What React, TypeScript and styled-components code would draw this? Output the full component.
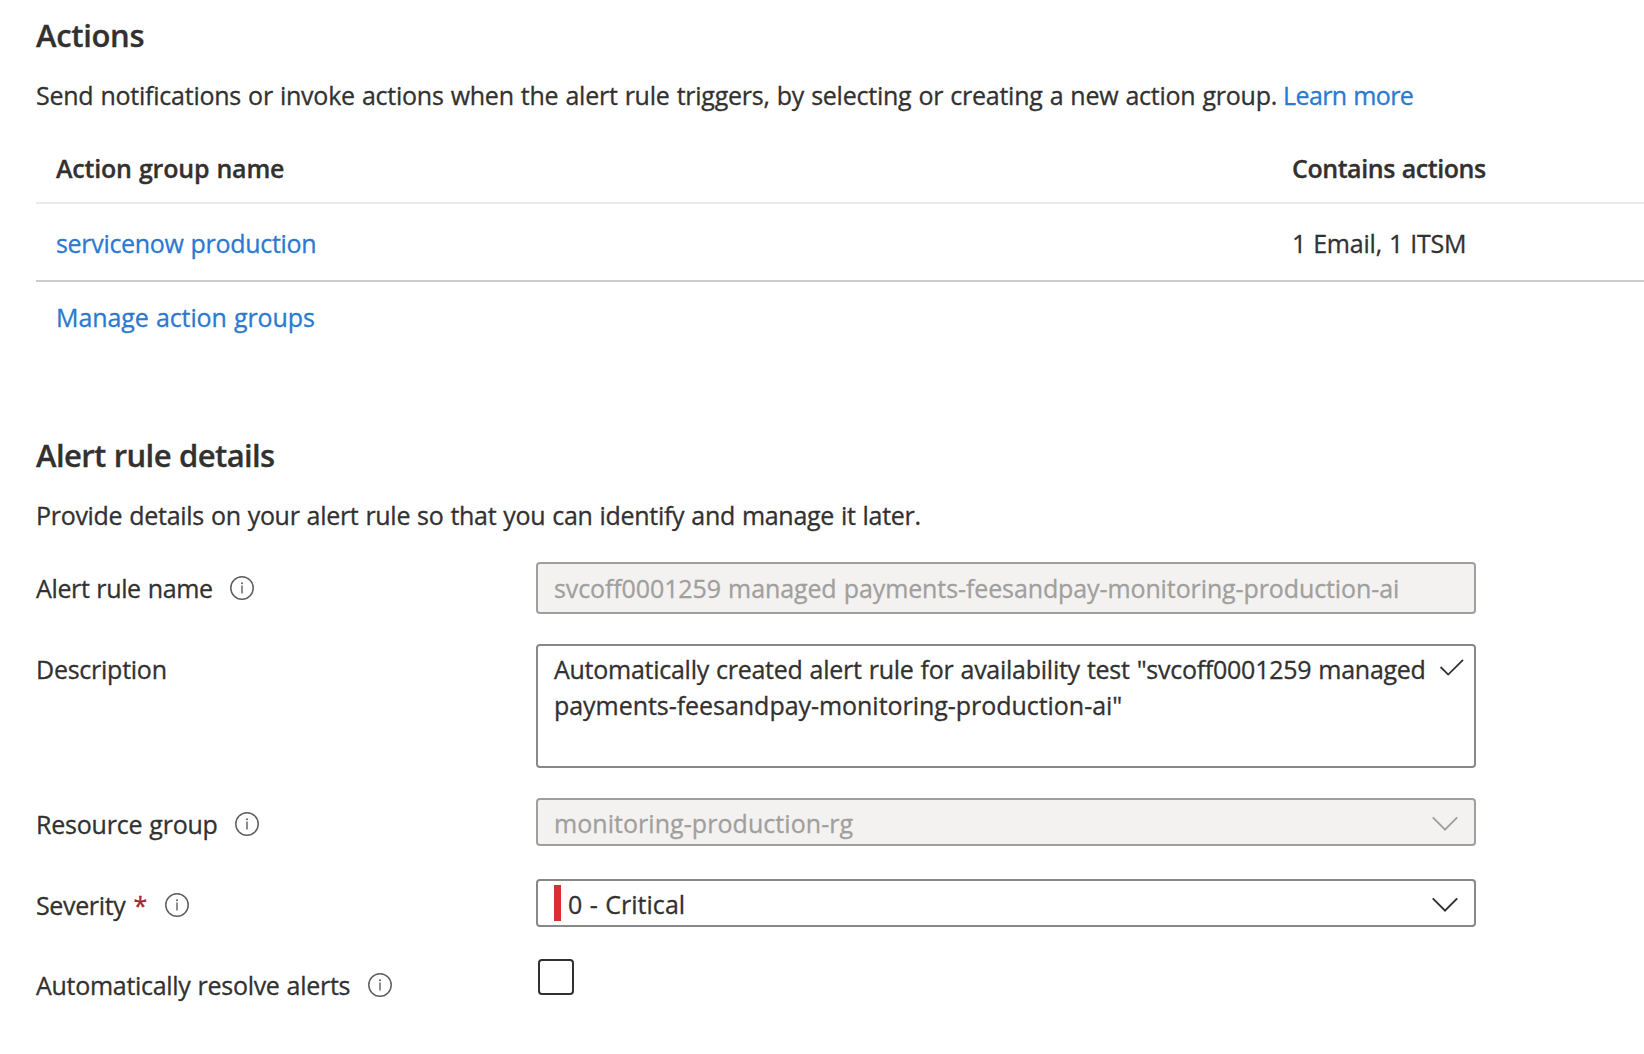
import React from "react";
import styled, { createGlobalStyle, css } from "styled-components";

const color = {
  text: "#323130",
  link: "#2b79d0",
  muted: "#a19f9d",
  border: "#8a8886",
  disabledBg: "#f3f2f1",
  icon: "#605e5c",
};

const GlobalStyle = createGlobalStyle`
  *, *::before, *::after { box-sizing: border-box; }
  body {
    margin: 0;
    background: #fff;
    color: ${color.text};
    font-family: "Segoe UI", "Open Sans", "Noto Sans", sans-serif;
    font-size: 25px;
    line-height: 36px;
    word-spacing: 0.8px;
    -webkit-text-stroke-width: 0.3px;
    overflow: hidden;
  }
`;

type Tracked = { $track?: number };
const tracking = css<Tracked>`
  letter-spacing: ${(p) => p.$track ?? -0.3}px;
  white-space: nowrap;
`;

const Page = styled.main`
  display: flex;
  flex-direction: column;
  height: 1054px;
  padding: 13px 0 0 36px;
`;

const Section = styled.section<{ $top?: number }>`
  display: flex;
  flex-direction: column;
  margin-top: ${(p) => p.$top ?? 0}px;
`;

const Heading = styled.h2<Tracked>`
  margin: 0;
  font-size: 31px;
  font-weight: 600;
  line-height: 44px;
  ${tracking}
`;

const Intro = styled.p<Tracked>`
  margin: 20px 0 0;
  ${tracking}
`;

const Link = styled.a<Tracked & { $gap?: number }>`
  color: ${color.link};
  text-decoration: none;
  margin-left: ${(p) => p.$gap ?? 0}px;
  ${tracking}
`;

const Table = styled.div`
  display: flex;
  flex-direction: column;
  margin-top: 21px;
`;

const TableRow = styled.div<{ $head?: boolean }>`
  display: grid;
  grid-template-columns: 1236px 1fr;
  align-items: center;
  height: ${(p) => (p.$head ? 70 : 78)}px;
  padding: ${(p) => (p.$head ? "0" : "1px")} 0 0 20px;
  font-weight: ${(p) => (p.$head ? 600 : 400)};
  border-bottom: 2px solid ${(p) => (p.$head ? "#eaeaea" : "#cccccc")};
`;

const Cell = styled.span<Tracked>`
  ${tracking}
`;

const TableFooter = styled.div`
  padding: 17px 0 0 20px;
`;

const Form = styled.div`
  display: flex;
  flex-direction: column;
  margin-top: 29px;
`;

const Field = styled.div<{ $gap: number }>`
  display: grid;
  grid-template-columns: 500px 940px;
  align-items: start;
  margin-bottom: ${(p) => p.$gap}px;
`;

const Label = styled.label<{ $top: number }>`
  display: flex;
  align-items: center;
  padding-top: ${(p) => p.$top}px;
`;

const LabelText = styled.span<Tracked>`
  ${tracking}
`;

const Required = styled.span`
  margin-left: 8px;
  color: #a4262c;
  font-size: 25px;
  font-weight: 400;
`;

const InfoSvg = styled.svg<{ $gap: number }>`
  flex: none;
  width: 24px;
  height: 24px;
  margin-left: ${(p) => p.$gap}px;
`;

const Box = styled.div<{ $height: number; $drop?: number; $disabled?: boolean }>`
  display: flex;
  align-items: center;
  height: ${(p) => p.$height}px;
  padding: ${(p) => p.$drop ?? 0}px 16px 0;
  border: 2px solid ${(p) => (p.$disabled ? color.muted : color.border)};
  border-radius: 4px;
  color: ${(p) => (p.$disabled ? color.muted : color.text)};
  background: ${(p) => (p.$disabled ? color.disabledBg : "#fff")};
`;

const MultilineBox = styled(Box)`
  align-items: flex-start;
  justify-content: space-between;
  padding: 5px 10px 0 16px;
`;

const Lines = styled.div`
  display: flex;
  flex-direction: column;
`;

const Value = styled.span<Tracked>`
  ${tracking}
`;

const SeverityBar = styled.span`
  width: 7px;
  height: 36px;
  margin: 0 7px 2px 0;
  background: #d83032;
`;

const ChevronSvg = styled.svg`
  width: 26px;
  height: 16px;
  margin-left: auto;
  margin-top: 2px;
`;

const CheckSvg = styled.svg`
  width: 26px;
  height: 20px;
  margin-top: 7px;
`;

const Checkbox = styled.span`
  width: 36px;
  height: 36px;
  margin-left: 2px;
  border: 2px solid ${color.text};
  border-radius: 4px;
`;

function Info({ gap = 17 }: { gap?: number }) {
  return (
    <InfoSvg $gap={gap} viewBox="0 0 24 24" fill="none">
      <circle cx="12" cy="12" r="11.2" stroke={color.icon} strokeWidth="1.5" />
      <path d="M12 9.6V17.6" stroke={color.icon} strokeWidth="1.4" />
      <circle cx="12" cy="7.2" r="1" fill={color.icon} />
    </InfoSvg>
  );
}

function Chevron({ stroke }: { stroke: string }) {
  return (
    <ChevronSvg viewBox="0 0 26 16" fill="none">
      <path d="M0.8 1.4L13 13.6L25.2 1.4" stroke={stroke} strokeWidth="2" />
    </ChevronSvg>
  );
}

function Check() {
  return (
    <CheckSvg viewBox="0 0 26 20" fill="none">
      <path d="M2.6 9L10.2 16.6L25 1.8" stroke={color.text} strokeWidth="1.8" />
    </CheckSvg>
  );
}

export default function App() {
  return (
    <>
      <GlobalStyle />
      <Page>
        <Section>
          <Heading $track={-0.32}>Actions</Heading>
          <Intro $track={-0.24}>
            Send notifications or invoke actions when the alert rule triggers, by selecting or creating a new action group.
            <Link $track={-0.62} $gap={6}>Learn more</Link>
          </Intro>
          <Table>
            <TableRow $head>
              <Cell $track={-0.19}>Action group name</Cell>
              <Cell $track={-0.44}>Contains actions</Cell>
            </TableRow>
            <TableRow>
              <Link $track={-0.31}>servicenow production</Link>
              <Cell $track={-0.21}>1 Email, 1 ITSM</Cell>
            </TableRow>
            <TableFooter>
              <Link $track={-0.09}>Manage action groups</Link>
            </TableFooter>
          </Table>
        </Section>

        <Section $top={98}>
          <Heading $track={-0.62}>Alert rule details</Heading>
          <Intro $track={-0.3}>
            Provide details on your alert rule so that you can identify and manage it later.
          </Intro>
          <Form>
            <Field $gap={30}>
              <Label $top={8}>
                <LabelText $track={-0.37}>Alert rule name</LabelText>
                <Info />
              </Label>
              <Box $height={52} $disabled>
                <Value $track={-0.105}>svcoff0001259 managed payments-feesandpay-monitoring-production-ai</Value>
              </Box>
            </Field>
            <Field $gap={30}>
              <Label $top={7}>
                <LabelText $track={-0.25}>Description</LabelText>
              </Label>
              <MultilineBox $height={124}>
                <Lines>
                  <Value $track={-0.26}>Automatically created alert rule for availability test "svcoff0001259 managed</Value>
                  <Value $track={-0.04}>payments-feesandpay-monitoring-production-ai"</Value>
                </Lines>
                <Check />
              </MultilineBox>
            </Field>
            <Field $gap={33}>
              <Label $top={8}>
                <LabelText $track={-0.22}>Resource group</LabelText>
                <Info />
              </Label>
              <Box $height={48} $drop={2} $disabled>
                <Value $track={0.054}>monitoring-production-rg</Value>
                <Chevron stroke={color.muted} />
              </Box>
            </Field>
            <Field $gap={32}>
              <Label $top={8}>
                <LabelText $track={-0.35}>Severity</LabelText>
                <Required>*</Required>
                <Info gap={18} />
              </Label>
              <Box $height={48} $drop={2}>
                <SeverityBar />
                <Value $track={0.05}>0 - Critical</Value>
                <Chevron stroke={color.text} />
              </Box>
            </Field>
            <Field $gap={0}>
              <Label $top={8}>
                <LabelText $track={-0.29}>Automatically resolve alerts</LabelText>
                <Info gap={18} />
              </Label>
              <Checkbox />
            </Field>
          </Form>
        </Section>
      </Page>
    </>
  );
}
